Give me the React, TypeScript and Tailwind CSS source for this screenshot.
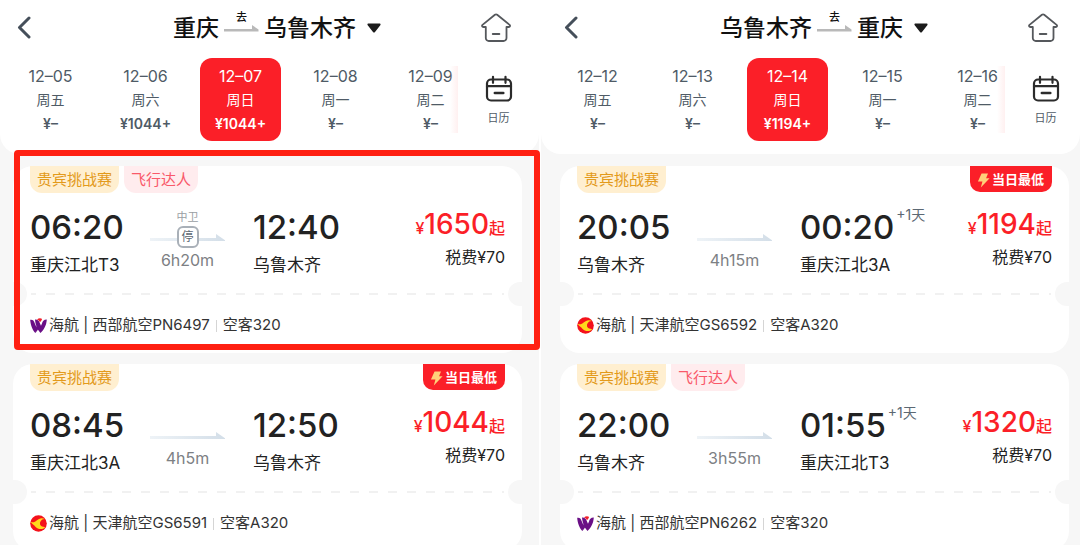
import { clsx } from 'clsx'

type Day = { date: string; week: string; price: string }

type Flight = {
  tags: string[]
  lowest?: boolean
  depart: string
  from: string
  arrive: string
  to: string
  nextDay?: boolean
  stop?: string
  duration: string
  price: string
  airline: 'west' | 'tianjin'
  flightNo: string
  plane: string
  marked?: boolean
}

type Trip = { from: string; to: string; days: Day[]; selected: number; flights: Flight[] }

const outbound: Trip = {
  from: '重庆',
  to: '乌鲁木齐',
  selected: 2,
  days: [
    { date: '12–05', week: '周五', price: '¥–' },
    { date: '12–06', week: '周六', price: '¥1044+' },
    { date: '12–07', week: '周日', price: '¥1044+' },
    { date: '12–08', week: '周一', price: '¥–' },
    { date: '12–09', week: '周二', price: '¥–' },
  ],
  flights: [
    {
      tags: ['贵宾挑战赛', '飞行达人'],
      depart: '06:20',
      from: '重庆江北T3',
      arrive: '12:40',
      to: '乌鲁木齐',
      stop: '中卫',
      duration: '6h20m',
      price: '1650',
      airline: 'west',
      flightNo: '西部航空PN6497',
      plane: '空客320',
      marked: true,
    },
    {
      tags: ['贵宾挑战赛'],
      lowest: true,
      depart: '08:45',
      from: '重庆江北3A',
      arrive: '12:50',
      to: '乌鲁木齐',
      duration: '4h5m',
      price: '1044',
      airline: 'tianjin',
      flightNo: '天津航空GS6591',
      plane: '空客A320',
    },
  ],
}

const inbound: Trip = {
  from: '乌鲁木齐',
  to: '重庆',
  selected: 2,
  days: [
    { date: '12–12', week: '周五', price: '¥–' },
    { date: '12–13', week: '周六', price: '¥–' },
    { date: '12–14', week: '周日', price: '¥1194+' },
    { date: '12–15', week: '周一', price: '¥–' },
    { date: '12–16', week: '周二', price: '¥–' },
  ],
  flights: [
    {
      tags: ['贵宾挑战赛'],
      lowest: true,
      depart: '20:05',
      from: '乌鲁木齐',
      arrive: '00:20',
      to: '重庆江北3A',
      nextDay: true,
      duration: '4h15m',
      price: '1194',
      airline: 'tianjin',
      flightNo: '天津航空GS6592',
      plane: '空客A320',
    },
    {
      tags: ['贵宾挑战赛', '飞行达人'],
      depart: '22:00',
      from: '乌鲁木齐',
      arrive: '01:55',
      to: '重庆江北T3',
      nextDay: true,
      duration: '3h55m',
      price: '1320',
      airline: 'west',
      flightNo: '西部航空PN6262',
      plane: '空客320',
    },
  ],
}

function BackIcon() {
  return (
    <svg width="24" height="24" viewBox="0 0 24 24" fill="none" stroke="#454f5a" strokeWidth="3" strokeLinecap="round" strokeLinejoin="round">
      <path d="M16 2 6.500 11.500 16 21" />
    </svg>
  )
}

function HomeIcon() {
  return (
    <svg width="30" height="30" viewBox="0 0 30 30" fill="none" stroke="#55585c" strokeWidth="1.800" strokeLinecap="round" strokeLinejoin="round">
      <path d="M13.900 1.800a1.800 1.800 0 0 1 2.300 0L28.600 11.900c.9.900.4 2.100-.8 2.100h-2.300v11a3 3 0 0 1-3 3H7.800a3 3 0 0 1-3-3V14H2.300c-1.200 0-1.700-1.200-.8-2.100Z" />
      <path d="M11.800 21h6.500" strokeWidth="2" />
    </svg>
  )
}

function CalendarIcon() {
  return (
    <svg width="28" height="28" viewBox="0 0 28 28" fill="none" stroke="#2b2b2b" strokeWidth="2.200" strokeLinecap="round">
      <rect x="2" y="4.500" width="24" height="21" rx="4" />
      <path d="M2 11.200h24M8 1.800v6M20.500 1.800v6" />
      <path d="M9.800 18h8.500" strokeWidth="2.500" />
    </svg>
  )
}

function TitleArrow() {
  return (
    <svg width="35" height="8" viewBox="0 0 35 8">
      <path d="M0 4h28V0L34.500 4.500V6.500H0Z" fill="#b9b9b9" />
    </svg>
  )
}

function FlightArrow() {
  return (
    <svg className="block w-full" height="8" viewBox="0 0 75 8">
      <defs>
        <linearGradient id="trail" x1="0" x2="1">
          <stop offset="0" stopColor="#eef3f7" />
          <stop offset="1" stopColor="#d3dee8" />
        </linearGradient>
      </defs>
      <path d="M0 4h66V0l10 7H0Z" fill="url(#trail)" />
    </svg>
  )
}

function BoltIcon() {
  return (
    <svg width="13" height="15" viewBox="0 0 12 14">
      <path d="M4.200.5h6L8.400 4.800H11.700L3.500 13.500 5 8H.8Z" fill="#ffd07a" />
    </svg>
  )
}

function AirlineLogo({ airline }: { airline: Flight['airline'] }) {
  if (airline === 'west') {
    return (
      <svg width="17" height="16" viewBox="0 0 17 16">
        <g fill="#6a0f86">
          <path d="M.2 1.800C2.600 1.400 4 2.600 4.600 5L6.900 10.200 5.400 14.900C2.800 12.800.5 7.200.2 1.800Z" />
          <path d="M5 1.600C7.600 1.400 9.100 2.800 9.800 5L12 10.200 10.500 14.900C7.900 12.800 5.400 7.200 5 1.600Z" />
          <path d="M8.300 5 6 9.500 5.400 14.900C7.400 13 8.600 10.500 9.400 8Z" />
          <path d="M16.800 1.500C13.600 1.500 12.500 3.400 12 5.400L10.200 9.500 10.500 14.900C13.800 12.300 16.500 7.200 16.800 1.500Z" />
        </g>
        <path d="M7 1.500C8.600 0 10.800-.1 12.100 1 11.600 2.500 10.700 3.700 9.800 4.100 9.400 2.700 8.400 1.900 7 1.500Z" fill="#f0202b" />
      </svg>
    )
  }
  return (
    <svg width="17" height="17" viewBox="0 0 17 17">
      <circle cx="8.500" cy="8.500" r="8.300" fill="#f4121b" />
      <path d="M.4 6.800C3 7.800 4.800 7.400 6.600 5.600 9 3.200 12 2.400 15 4.100 12.800 4 11.600 4.800 10.800 6.300 9.800 8.600 10.800 11.600 15.200 12.200 12.600 15 8 14.600 5.400 11.800 4.200 10.200 2 9 .4 6.800Z" fill="#ffd91c" />
      <circle cx="12.800" cy="8.600" r="2.800" fill="#f4121b" />
    </svg>
  )
}

function TripHeader({ trip, className }: { trip: Trip; className: string }) {
  return (
    <header className={clsx('rounded-b-[20px] bg-white pb-[13px]', className)}>
      <div className="flex h-[58px] items-center pr-[22px] pb-[2px] pl-[13px]">
        <button type="button" aria-label="返回" className="w-[60px]">
          <BackIcon />
        </button>
        <button type="button" className="flex flex-1 items-center justify-center text-[23px] leading-8 font-medium text-[#111]">
          <span>{trip.from}</span>
          <span className="mx-[5px] flex flex-col items-center gap-[2px] pb-3">
            <span className="text-[11px] leading-3">去</span>
            <TitleArrow />
          </span>
          <span>{trip.to}</span>
          <svg className="ml-[11px]" width="14" height="10" viewBox="0 0 14 10">
            <path d="M1.500.5h11c1 0 1.400 1 .8 1.700L8 9a1.300 1.300 0 0 1-2 0L.7 2.200C.1 1.500.5.5 1.500.5Z" fill="#1c1c1c" />
          </svg>
        </button>
        <button type="button" aria-label="首页">
          <HomeIcon />
        </button>
      </div>
      <div className="flex">
        <div className="relative flex flex-1 overflow-hidden pl-[3px]">
          {trip.days.map((day, i) => (
            <button
              key={day.date}
              type="button"
              className={clsx(
                'mx-[7px] flex h-[83px] w-[81px] shrink-0 flex-col items-center justify-center rounded-xl pt-px whitespace-nowrap',
                i === trip.selected ? 'bg-[#fb1f28] text-white' : 'text-[#4f5b66]'
              )}
            >
              <span className="text-base leading-6">{day.date}</span>
              <span className="text-sm leading-6">{day.week}</span>
              <span className="text-sm leading-6 font-semibold">{day.price}</span>
            </button>
          ))}
          <div className="pointer-events-none absolute inset-y-2 right-0 w-2 bg-linear-to-r from-white/0 to-[#fff0f0]" />
        </div>
        <button type="button" className="flex w-[75px] flex-col items-center pt-[17px] pl-[6px] text-[11px] leading-[30px] text-[#4f5b66]">
          <CalendarIcon />
          日历
        </button>
      </div>
    </header>
  )
}

function FlightCard({ flight }: { flight: Flight }) {
  return (
    <article className="relative rounded-[20px] bg-white">
      <div className="flex h-[27px] items-start gap-[5px] px-[17px]">
        {flight.tags.map((tag, i) => (
          <span
            key={tag}
            className={clsx(
              'rounded-b-xl px-[7px] text-[15px] leading-[27px]',
              i === 0 ? 'bg-[#ffefd0] text-[#e39a1b]' : 'bg-[#ffecee] text-[#f9596a]'
            )}
          >
            {tag}
          </span>
        ))}
        {flight.lowest && (
          <span className="ml-auto flex h-[26px] items-center gap-[2px] rounded-b-[10px] bg-[#fb1f28] pt-[2px] pr-2 pl-[7px] text-[13px] font-bold text-white">
            <BoltIcon />
            当日最低
          </span>
        )}
      </div>

      <div className="flex h-[101px] px-[17px] pt-[14px] text-[#222]">
        <div className="w-[120px] whitespace-nowrap">
          <div className="text-[33px] leading-10 font-medium">{flight.depart}</div>
          <div className="text-[17px] leading-9">{flight.from}</div>
        </div>
        <div className="relative w-[75px] pt-[27px] text-center text-base text-[#7d8084]">
          <FlightArrow />
          {flight.stop && (
            <div className="absolute inset-x-0 top-px flex flex-col items-center text-[#9a9ea3]">
              <span className="text-[11px] leading-[18px]">{flight.stop}</span>
              <span className="flex size-[22px] items-center justify-center rounded-md border-2 border-[#a9b0b8] bg-white text-xs text-[#5c6873]">
                停
              </span>
            </div>
          )}
          <div className="pt-2 leading-5">{flight.duration}</div>
        </div>
        <div className="ml-7 flex-1 whitespace-nowrap">
          <div className="flex items-start text-[33px] leading-10 font-medium">
            {flight.arrive}
            {flight.nextDay && <span className="ml-[2px] text-sm leading-4 font-normal text-[#5c6873]">+1天</span>}
          </div>
          <div className="text-[17px] leading-9">{flight.to}</div>
        </div>
        <div className="text-right whitespace-nowrap">
          <div className="text-[28px] leading-[34px] font-medium text-[#fb1f28]">
            <span className="text-base">¥</span>
            {flight.price}
            <span className="text-base">起</span>
          </div>
          <div className="text-base leading-8">税费¥70</div>
        </div>
      </div>

      {/* ticket perforation */}
      <div className="-my-3 flex h-6 items-center justify-between">
        <span className="h-6 w-[14px] rounded-r-full bg-[#f7f7f7]" />
        <span className="mx-1 h-[2px] flex-1 bg-[repeating-linear-gradient(90deg,#f1f1f1_0_5px,transparent_5px_15px,#f1f1f1_15px_19px)]" />
        <span className="h-6 w-[14px] rounded-l-full bg-[#f7f7f7]" />
      </div>

      <div className="flex h-[59px] items-center px-[17px] pt-1 text-[15px] whitespace-nowrap text-[#333]">
        <AirlineLogo airline={flight.airline} />
        <span className="ml-[2px]">海航 | {flight.flightNo}</span>
        <span className="mx-[6px] h-3 w-px bg-[#d5d5d5]" />
        <span>{flight.plane}</span>
      </div>

      {flight.marked && (
        <div className="pointer-events-none absolute -top-4 -right-[18px] bottom-[3px] left-px z-10 rounded-sm border-6 border-[#ff2012]" />
      )}
    </article>
  )
}

function TripPanel({ trip, side }: { trip: Trip; side: 'left' | 'right' }) {
  const inset = side === 'left' ? 'pr-[6px]' : 'pl-[6px]'
  return (
    <section className="min-w-0 bg-[#f7f7f7]">
      <TripHeader trip={trip} className={inset} />
      <div className={inset}>
        <div className="flex flex-col gap-[11px] pt-3 pr-[11px] pl-[13px]">
          {trip.flights.map(flight => (
            <FlightCard key={flight.flightNo} flight={flight} />
          ))}
        </div>
      </div>
    </section>
  )
}

export default function App() {
  return (
    <main className="grid h-screen grid-cols-2 gap-[2px] overflow-hidden bg-white font-['Inter','Noto_Sans_CJK_SC',sans-serif]">
      <TripPanel trip={outbound} side="left" />
      <TripPanel trip={inbound} side="right" />
    </main>
  )
}
